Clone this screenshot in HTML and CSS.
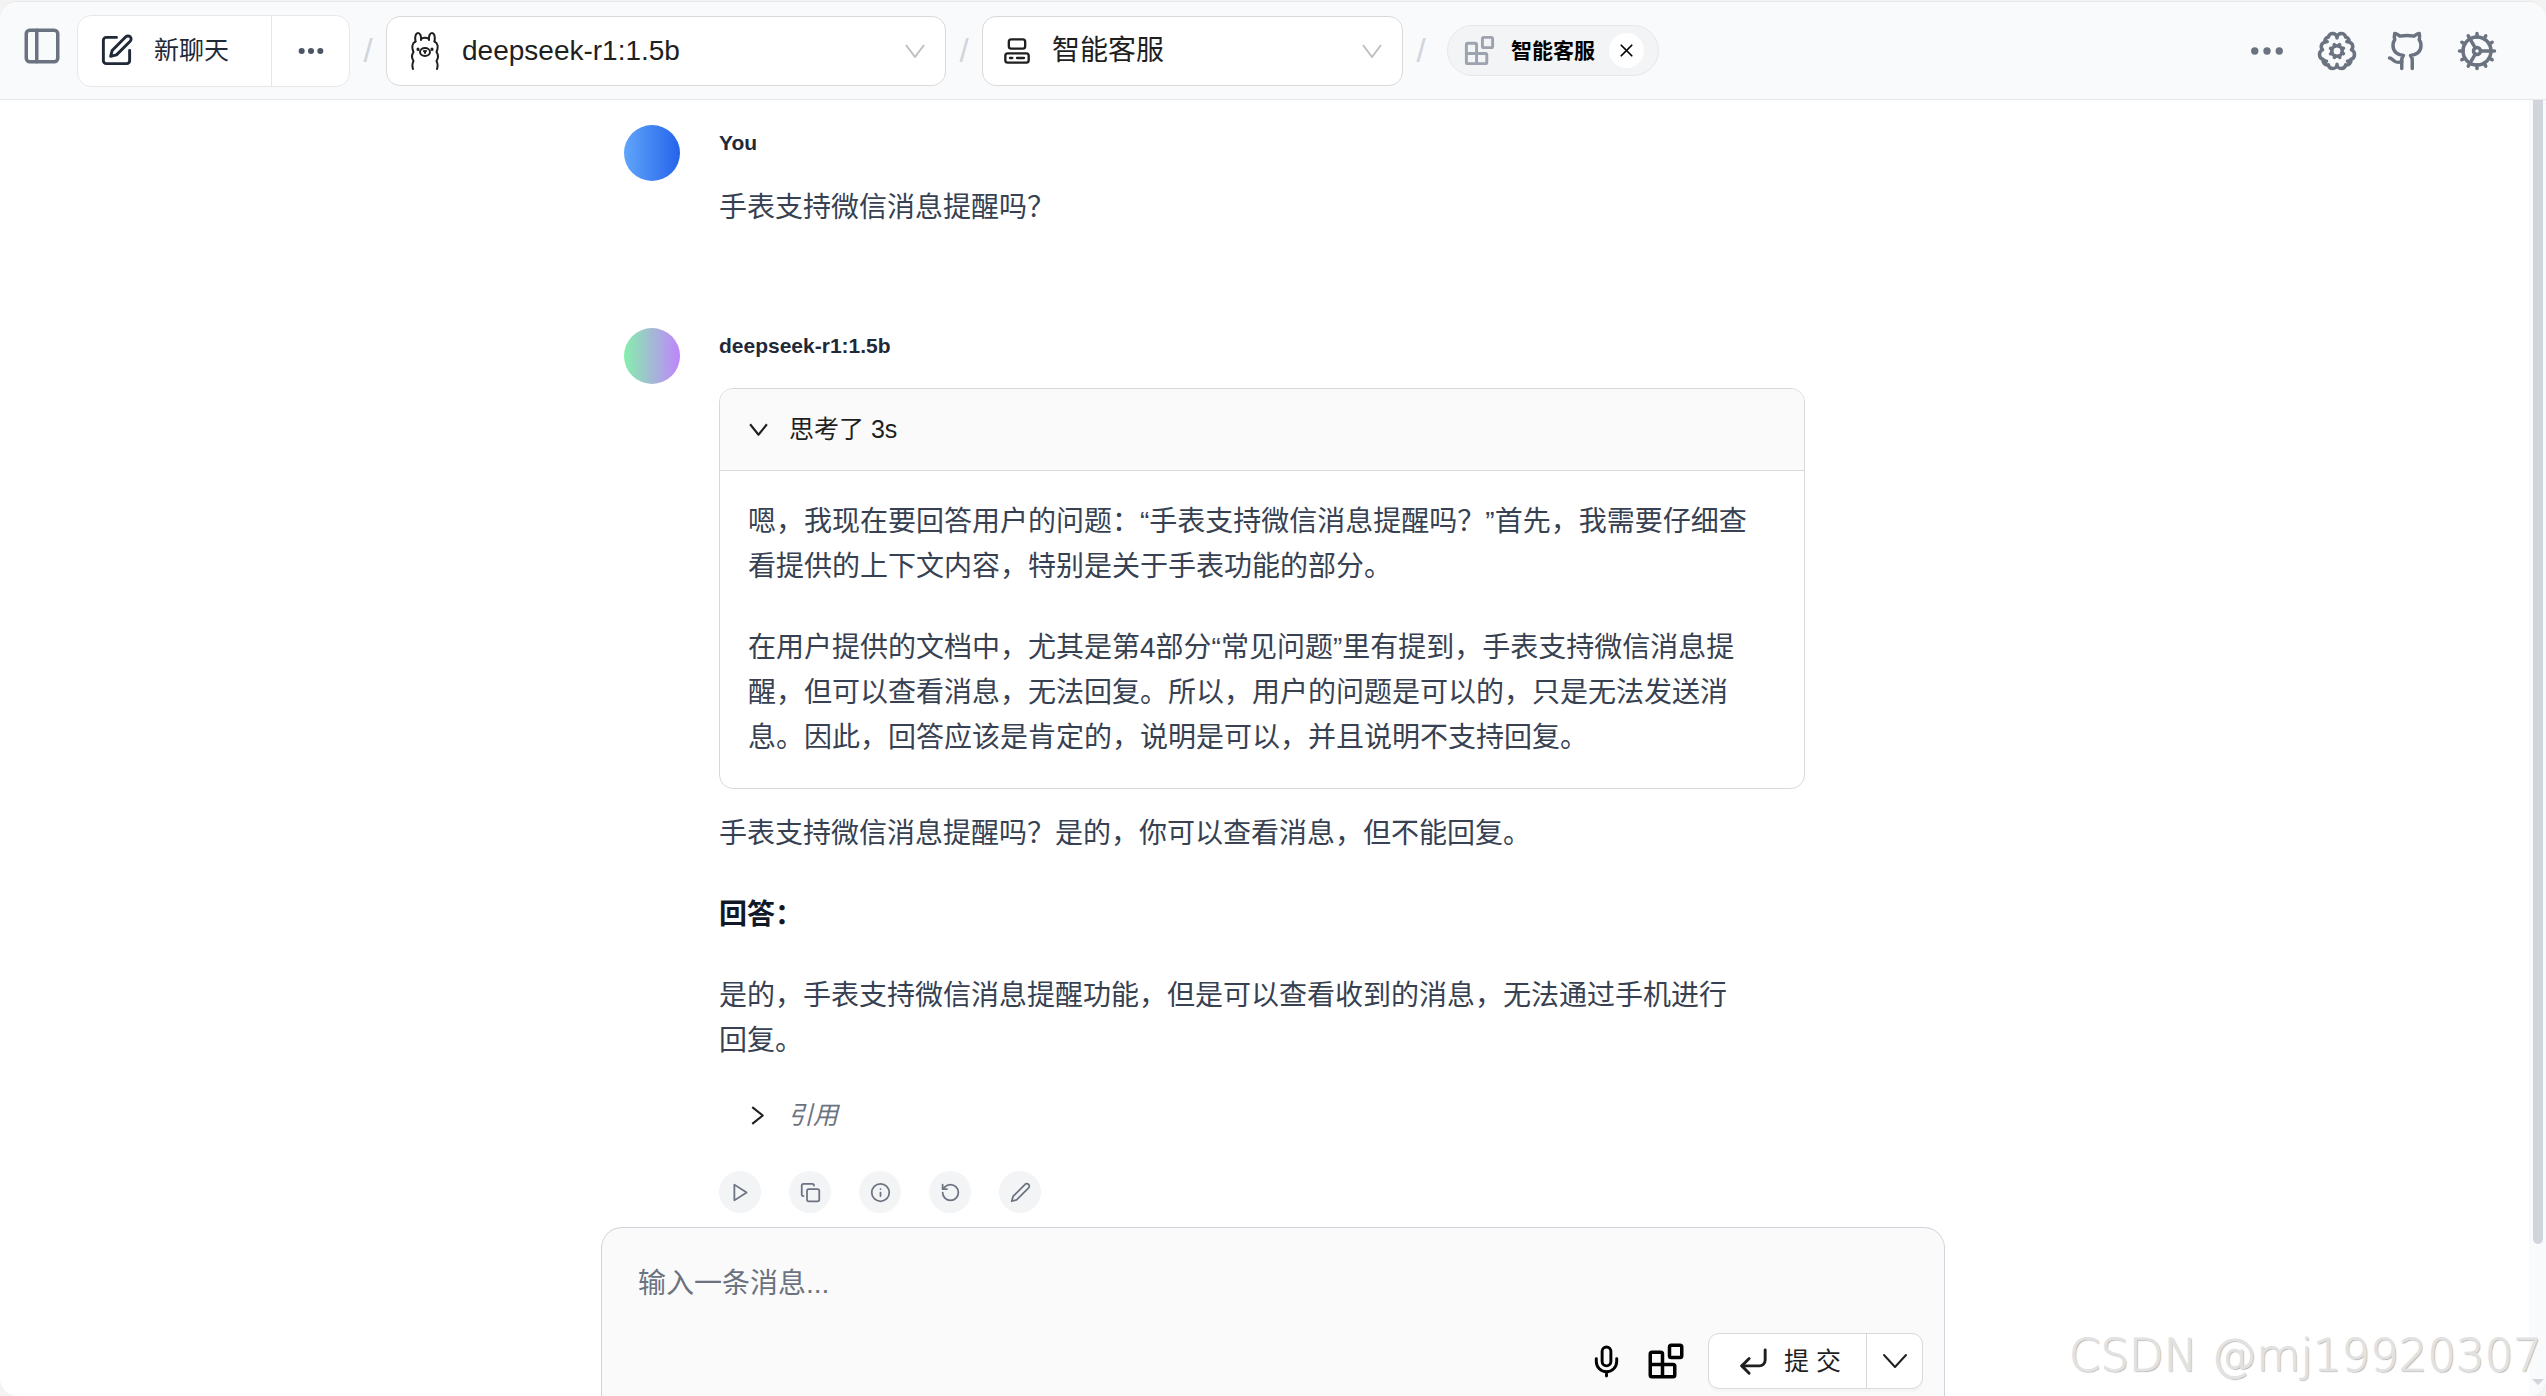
FILE: index.html
```html
<!DOCTYPE html>
<html lang="zh-CN">
    <head>
        <meta charset="utf-8">
        <title>智能客服</title>
        <link rel="stylesheet" href="styles.css">
    </head>
    <body>

        <div class="app">

            <header class="topbar">
                <button class="icon-button sidebar-toggle" aria-label="侧边栏">
                    <svg class="icon" viewBox="0 0 24 24"><rect x="3" y="3" width="18" height="18" rx="2"/><path d="M9 3v18"/></svg>
                </button>

                <div class="new-chat">
                    <button class="new-chat-start">
                        <svg class="icon" viewBox="0 0 24 24"><path d="M12 3H5a2 2 0 0 0-2 2v14a2 2 0 0 0 2 2h14a2 2 0 0 0 2-2v-7"/><path d="M18.375 2.625a2.121 2.121 0 1 1 3 3L12 15l-4 1 1-4Z"/></svg>
                        新聊天
                    </button>
                    <button class="new-chat-more" aria-label="更多">
                        <svg class="icon filled" viewBox="0 0 24 24"><circle cx="4" cy="12" r="2.6"/><circle cx="12" cy="12" r="2.6"/><circle cx="20" cy="12" r="2.6"/></svg>
                    </button>
                </div>

                <span class="slash">/</span>

                <label class="picker picker-model">
                    <svg class="icon llama" viewBox="0 0 28 38">
                        <path d="M4.500 9.500C3.500 4 5 1 7 1s3.500 3 3 7M23.500 9.500C24.500 4 23 1 21 1s-3.500 3-3 7"/>
                        <path d="M10 7c2.500-1.500 5.500-1.500 8 0"/>
                        <path d="M4.500 9.500C1 11 .500 15.500 2.500 20c-2 3-2 6 0 9-1.500 3-1.500 5-.500 8M23.500 9.500C27 11 27.500 15.500 25.500 20c2 3 2 6 0 9 1.500 3 1.500 5 .500 8"/>
                        <ellipse cx="14" cy="20" rx="5" ry="4"/>
                        <path d="M13 19l1 1 1-1M14 20v1"/>
                        <path d="M7 17v.500M21 17v.500" class="eyes"/>
                    </svg>
                    <select aria-label="模型"><option>deepseek-r1:1.5b</option></select>
                    <svg class="icon arrow" viewBox="0 0 20 20"><path d="M1 4l9 12 9-12"/></svg>
                </label>

                <span class="slash">/</span>

                <label class="picker picker-prompt">
                    <svg class="icon" viewBox="0 0 24 24"><rect x="5" y="2" width="14" height="8" rx="2"/><rect x="2" y="14" width="20" height="8" rx="2"/><path d="M6 18h2M12 18h6"/></svg>
                    <select aria-label="提示词"><option>智能客服</option></select>
                    <svg class="icon arrow" viewBox="0 0 20 20"><path d="M1 4l9 12 9-12"/></svg>
                </label>

                <span class="slash">/</span>

                <div class="tag">
                    <svg class="icon" viewBox="0 0 24 24"><rect x="14" y="3" width="7" height="7" rx="1"/><path d="M10 21V8a1 1 0 0 0-1-1H4a1 1 0 0 0-1 1v12a1 1 0 0 0 1 1h12a1 1 0 0 0 1-1v-5a1 1 0 0 0-1-1H3"/></svg>
                    <span>智能客服</span>
                    <button class="tag-close" aria-label="移除">
                        <svg class="icon" viewBox="0 0 24 24"><path d="M18 6 6 18M6 6l12 12"/></svg>
                    </button>
                </div>

                <nav class="tools">
                    <button class="icon-button" aria-label="菜单">
                        <svg class="icon filled" viewBox="0 0 24 24"><circle cx="5" cy="12" r="2.1"/><circle cx="12" cy="12" r="2.1"/><circle cx="19" cy="12" r="2.1"/></svg>
                    </button>
                    <a class="icon-button" href="#knowledge" aria-label="知识库">
                        <svg class="icon" viewBox="0 0 24 24"><circle cx="12" cy="12" r="3"/><path d="M12 4.5a2.5 2.5 0 0 0-4.96-.46 2.5 2.5 0 0 0-1.98 3 2.5 2.5 0 0 0-1.32 4.24 3 3 0 0 0 .34 5.58 2.5 2.5 0 0 0 2.96 3.08A2.5 2.5 0 0 0 9.5 22c1.21 0 2.5-.74 2.5-2.5m0-15a2.5 2.5 0 0 1 4.96-.46 2.5 2.5 0 0 1 1.98 3 2.5 2.5 0 0 1 1.32 4.24 3 3 0 0 1-.34 5.58 2.5 2.5 0 0 1-2.96 3.08A2.5 2.5 0 0 1 14.5 22c-1.21 0-2.5-.74-2.5-2.5M5 6.8a2.5 2.5 0 0 0 1.4-.1M19 6.8a2.5 2.5 0 0 1-1.4-.1M4.2 17a3 3 0 0 0 1.8.8M19.8 17a3 3 0 0 1-1.8.8"/><path d="m15.7 10.4-.9.4M9.2 13.2l-.9.4M13.6 15.7l-.4-.9M10.8 9.2l-.4-.9M15.7 13.5l-.9-.4M9.2 10.9l-.9-.4M10.5 15.7l.4-.9M13.1 9.2l.4-.9"/></svg>
                    </a>
                    <a class="icon-button" href="#github" aria-label="GitHub">
                        <svg class="icon" viewBox="0 0 24 24"><path d="M15 22v-4a4.8 4.8 0 0 0-1-3.5c3 0 6-2 6-5.5.08-1.25-.27-2.48-1-3.5.28-1.15.28-2.35 0-3.5 0 0-1 0-3 1.5-2.64-.5-5.36-.5-8 0C6 2 5 2 5 2c-.3 1.15-.3 2.35 0 3.5A5.403 5.403 0 0 0 4 9c0 3.5 3 5.5 6 5.5-.39.49-.68 1.05-.85 1.65-.17.6-.22 1.23-.15 1.85v4"/><path d="M9 18c-4.51 2-5-2-7-2"/></svg>
                    </a>
                    <a class="icon-button" href="#settings" aria-label="设置">
                        <svg class="icon" viewBox="0 0 24 24"><circle cx="12" cy="12" r="8"/><circle cx="12" cy="12" r="2"/><path d="M12 2v2M12 22v-2M17 20.66l-1-1.73M11 10.27 7 3.34M20.66 17l-1.73-1M3.34 7l1.73 1M14 12h8M2 12h2M20.66 7l-1.73 1M3.34 17l1.73-1M17 3.34l-1 1.73M11 13.73l-4 6.93"/></svg>
                    </a>
                </nav>
            </header>

            <main class="chat">

                <section class="messages">
                    <article class="message">
                        <div class="avatar avatar-user"></div>
                        <div class="message-body">
                            <h2>You</h2>
                            <div class="prose">
                                <p>手表支持微信消息提醒吗？</p>
                            </div>
                        </div>
                    </article>

                    <article class="message">
                        <div class="avatar avatar-bot"></div>
                        <div class="message-body">
                            <h2>deepseek-r1:1.5b</h2>
                            <div class="thinking">
                                <button class="thinking-title">
                                    <svg class="icon" viewBox="0 0 20 20"><path d="M2 5l8 10 8-10"/></svg>
                                    思考了 3s
                                </button>
                                <div class="thinking-text prose">
                                    <p>嗯，我现在要回答用户的问题：“手表支持微信消息提醒吗？”首先，我需要仔细查看提供的上下文内容，特别是关于手表功能的部分。</p>
                                    <p>在用户提供的文档中，尤其是第4部分“常见问题”里有提到，手表支持微信消息提醒，但可以查看消息，无法回复。所以，用户的问题是可以的，只是无法发送消息。因此，回答应该是肯定的，说明是可以，并且说明不支持回复。</p>
                                </div>
                            </div>
                            <div class="answer prose">
                                <p>手表支持微信消息提醒吗？是的，你可以查看消息，但不能回复。</p>
                                <p><strong>回答：</strong></p>
                                <p>是的，手表支持微信消息提醒功能，但是可以查看收到的消息，无法通过手机进行回复。</p>
                            </div>
                            <button class="sources">
                                <svg class="icon" viewBox="0 0 20 20"><path d="M5 2l10 8-10 8"/></svg>
                                <em>引用</em>
                            </button>
                            <div class="actions">
                                <button aria-label="播放"><svg class="icon" viewBox="0 0 24 24"><path d="M5 3l14 9-14 9z"/></svg></button>
                                <button aria-label="复制"><svg class="icon" viewBox="0 0 24 24"><rect x="8" y="8" width="14" height="14" rx="2"/><path d="M4 16c-1.1 0-2-.9-2-2V4c0-1.1.9-2 2-2h10c1.1 0 2 .9 2 2"/></svg></button>
                                <button aria-label="信息"><svg class="icon" viewBox="0 0 24 24"><circle cx="12" cy="12" r="10"/><path d="M12 16v-4M12 8h.01"/></svg></button>
                                <button aria-label="重新生成"><svg class="icon" viewBox="0 0 24 24"><path d="M3 12a9 9 0 1 0 9-9 9.75 9.75 0 0 0-6.74 2.74L3 8"/><path d="M3 3v5h5"/></svg></button>
                                <button aria-label="编辑"><svg class="icon" viewBox="0 0 24 24"><path d="M17 3a2.85 2.83 0 1 1 4 4L7.5 20.5 2 22l1.5-5.5Z"/></svg></button>
                            </div>
                        </div>
                    </article>
                </section>

                <form class="composer">
                    <textarea rows="1" placeholder="输入一条消息..." aria-label="输入一条消息"></textarea>
                    <div class="composer-tools">
                        <button type="button" class="mic" aria-label="语音">
                            <svg class="icon" viewBox="0 0 24 24"><path d="M12 2a3 3 0 0 0-3 3v7a3 3 0 0 0 6 0V5a3 3 0 0 0-3-3Z"/><path d="M19 10v2a7 7 0 0 1-14 0v-2M12 19v3"/></svg>
                        </button>
                        <button type="button" class="blocks" aria-label="知识">
                            <svg class="icon" viewBox="0 0 24 24"><rect x="14" y="3" width="7" height="7" rx="1"/><path d="M10 21V8a1 1 0 0 0-1-1H4a1 1 0 0 0-1 1v12a1 1 0 0 0 1 1h12a1 1 0 0 0 1-1v-5a1 1 0 0 0-1-1H3"/></svg>
                        </button>
                        <div class="submit">
                            <button type="button" class="submit-send">
                                <svg class="icon" viewBox="0 0 24 24"><path d="M9 10l-5 5 5 5"/><path d="M20 4v7a4 4 0 0 1-4 4H4"/></svg>
                                提 交
                            </button>
                            <button type="button" class="submit-more" aria-label="更多选项">
                                <svg class="icon" viewBox="0 0 28 28"><path d="M3 8l11 12L25 8"/></svg>
                            </button>
                        </div>
                    </div>
                </form>

                <div class="scrollbar">
                    <div class="scrollbar-thumb"></div>
                    <div class="scrollbar-arrow"></div>
                </div>
            </main>

            <div class="watermark">CSDN @mj19920307</div>
        </div>

    </body>
</html>
```
FILE: styles.css
```css
* { margin: 0; padding: 0; box-sizing: border-box; }
html, body { height: 100%; }
body { background: #f3f3f3; padding-top: 1px; overflow: hidden; font-family: "Liberation Sans", "Noto Sans CJK SC", sans-serif; font-size: 25px; line-height: 35px; color: #1f2937; }
button, select, textarea { font: inherit; color: inherit; background: none; border: none; outline: none; }
button, a, select { cursor: pointer; }
button, a { display: flex; align-items: center; justify-content: center; }

.icon { flex: none; fill: none; stroke: currentColor; stroke-width: 2; stroke-linecap: round; stroke-linejoin: round; }
.icon.filled { fill: currentColor; stroke: none; }

.app { position: relative; height: 100%; display: flex; flex-direction: column; background: #ffffff; border-top: 1px solid #e8e8e8; border-radius: 18px; overflow: hidden; }

/* top bar */
.topbar { flex: none; height: 98px; padding: 0 48px 0 21px; display: flex; align-items: center; background: #f9fafb; border-bottom: 1px solid #e5e7eb; }
.icon-button { color: #6b7280; }
.icon-button .icon { width: 42px; height: 42px; }
.sidebar-toggle { padding-bottom: 9px; margin-right: 14px; }

.new-chat { display: flex; height: 72px; background: #ffffff; border: 1px solid #e5e7eb; border-radius: 14px; }
.new-chat-start { gap: 20px; padding: 0 42px 0 21px; border-right: 1px solid #e5e7eb; }
.new-chat-start .icon { width: 35px; height: 35px; }
.new-chat-more { width: 77px; color: #4b5563; }
.new-chat-more .icon { width: 28px; height: 28px; }

.slash { width: 36px; text-align: center; font-size: 33px; color: #d1d5db; }

.picker { display: flex; align-items: center; gap: 21px; height: 70px; padding: 0 20px; background: #ffffff; border: 1px solid #d9d9d9; border-radius: 14px; font-size: 28px; color: #1f1f1f; }
.picker-model { width: 560px; padding-left: 24px; gap: 23px; }
.picker-prompt { width: 421px; }
.picker select { flex: 1; min-width: 0; appearance: none; }
.picker .icon { width: 28px; height: 28px; }
.picker .llama { height: 38px; }
.picker .eyes { stroke-width: 3; }
.picker .arrow { width: 20px; height: 20px; color: #bfbfbf; stroke-linecap: butt; }

.tag { display: flex; align-items: center; height: 51px; margin-left: 8px; padding: 0 14px; background: #f3f4f6; border: 1px solid #e5e7eb; border-radius: 26px; color: #000000; font-size: 21px; font-weight: bold; }
.tag .icon { width: 35px; height: 35px; color: #9ca3af; margin-right: 14px; }
.tag-close { width: 35px; height: 35px; margin-left: 14px; border-radius: 50%; background: #ffffff; }
.tag-close .icon { width: 21px; height: 21px; margin: 0; color: #000000; }

.tools { margin-left: auto; display: flex; gap: 28px; }

/* conversation */
.chat { position: relative; flex: 1; min-height: 0; display: flex; flex-direction: column; align-items: center; }
.messages { flex: 1; min-height: 0; width: 100%; max-width: 1298px; padding-top: 25px; overflow: hidden; }
.message { display: flex; gap: 39px; margin-bottom: 98px; }
.avatar { flex: none; width: 56px; height: 56px; border-radius: 50%; }
.avatar-user { background: linear-gradient(to right, #60a5fa, #2563eb); }
.avatar-bot { background: linear-gradient(to right, #86efac, #c084fc); }
.message-body { flex: 1; min-width: 0; padding-right: 117px; }
.message h2 { font-size: 21px; line-height: 35px; margin-bottom: 25px; }

.prose { font-size: 28px; line-height: 45px; color: #374151; }
.prose p { max-width: 1012px; }
.prose p + p { margin-top: 36px; }
.prose strong { color: #111827; }

.thinking { border: 1px solid #d9d9d9; border-radius: 14px; overflow: hidden; }
.thinking-title { width: 100%; height: 82px; padding: 0 28px; gap: 20px; justify-content: flex-start; background: #fafafa; border-bottom: 1px solid #d9d9d9; color: #1f1f1f; }
.thinking-title .icon, .sources .icon { width: 21px; height: 21px; stroke-linecap: butt; }
.thinking-text { padding: 28px; }
.thinking-text p { max-width: 1004px; }

.answer { padding: 22px 0 35px; }
.sources { height: 35px; padding-left: 28px; gap: 20px; color: #1f1f1f; }
.sources em { color: #6b7280; }

.actions { display: flex; gap: 28px; margin-top: 38px; }
.actions button { width: 42px; height: 42px; border-radius: 50%; background: #f3f4f6; color: #6b7280; }
.actions .icon { width: 21px; height: 21px; }

/* message box, runs off the bottom edge */
.composer { flex: none; width: 100%; max-width: 1344px; padding: 28px 21px 7px 36px; background: #fafafa; border: 1px solid #d1d5db; border-bottom: none; border-radius: 21px 21px 0 0; }
.composer textarea { display: block; width: 100%; height: 77px; line-height: 56px; font-size: 28px; resize: none; overflow: hidden; }
.composer textarea::placeholder { color: #6b7280; }
.composer-tools { display: flex; align-items: center; justify-content: flex-end; color: #000000; }
.mic .icon { width: 35px; height: 35px; }
.blocks { margin: 0 21px; }
.blocks .icon { width: 42px; height: 42px; }
.submit { display: flex; height: 56px; background: #ffffff; border: 1px solid #d9d9d9; border-radius: 11px; box-shadow: 0 3px 0 rgba(0, 0, 0, 0.02); color: #1f1f1f; }
.submit-send { padding: 0 25px 0 27px; gap: 13px; border-right: 1px solid #d9d9d9; }
.submit-send .icon { width: 35px; height: 35px; }
.submit-more { width: 55px; }
.submit-more .icon { width: 28px; height: 28px; }

/* scrollbar over the right edge */
.scrollbar { position: absolute; top: 0; right: 0; bottom: 0; width: 17px; padding-bottom: 11px; display: flex; flex-direction: column; align-items: center; justify-content: space-between; background: #f9fafb; }
.scrollbar-thumb { width: 10px; height: 89%; background: #d1d5db; border-radius: 0 0 5px 5px; }
.scrollbar-arrow { border: 6px solid transparent; border-top-color: #d1d5db; border-bottom: none; }

.watermark { position: absolute; right: 4px; bottom: 10px; font-family: "DejaVu Sans", sans-serif; font-weight: 200; font-size: 45px; line-height: 60px; color: #e2e2e2; -webkit-text-stroke: 1px #e2e2e2; text-shadow: 1px 1px 1px #a8a8a8; }
```
